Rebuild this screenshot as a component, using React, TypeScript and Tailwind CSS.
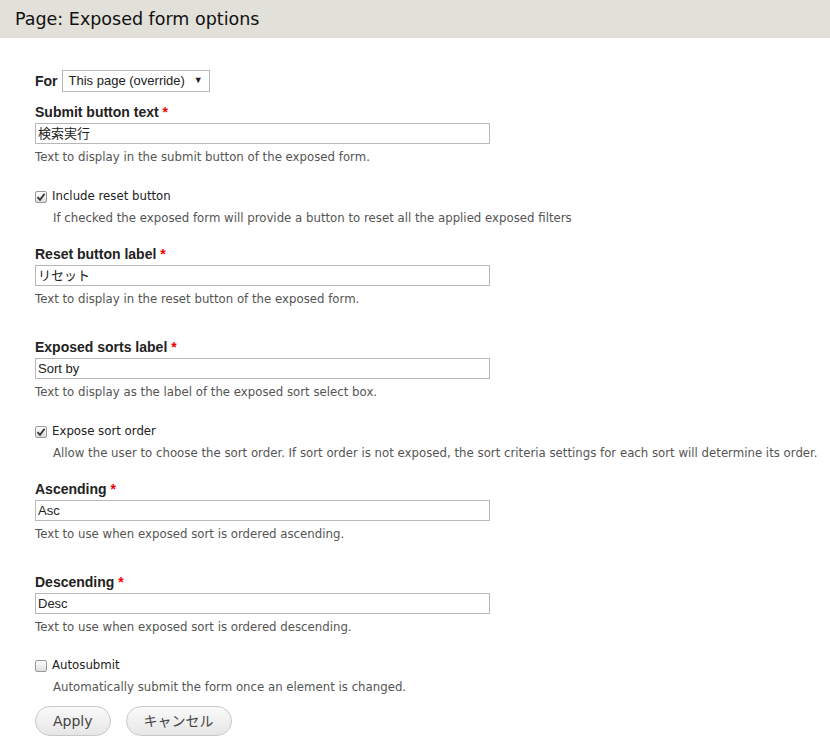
import React from "react";

const f = { fontFamily: '"DejaVu Sans", "Noto Sans CJK JP", sans-serif' };
const a = { fontFamily: '"Liberation Sans", "Noto Sans CJK JP", sans-serif' };

function Label({ t }: { t: string }) {
  return (
    <div className="text-[14px] font-bold text-[#222] leading-[16px] h-[16px]" style={a}>
      {t} <span className="text-[#e00]">*</span>
    </div>
  );
}
function Input({ v }: { v: string }) {
  return (
    <div className="mt-[3px] w-[455px] h-[21px] border border-[#b8b8b8] px-[2px] text-[13px] leading-[19px] text-[#222]" style={a}>
      {v}
    </div>
  );
}
function Desc({ t, ml = 0 }: { t: string; ml?: number }) {
  return (
    <div className="text-[11.75px] text-[#555] leading-[14px] mt-[6px]" style={{ ...f, marginLeft: ml }}>
      {t}
    </div>
  );
}
function Check({ t, checked }: { t: string; checked: boolean }) {
  return (
    <div className="flex items-center gap-[5px] h-[16px]">
      <div className="w-[12px] h-[12px] border border-[#999] rounded-[2px] bg-gradient-to-b from-[#fff] to-[#ddd] flex items-center justify-center">
        {checked && (
          <svg width="10" height="10" viewBox="0 0 10 10"><path d="M1.5 5.2 L4 7.8 L8.6 1.8" stroke="#333" strokeWidth="1.8" fill="none" /></svg>
        )}
      </div>
      <span className="text-[11.75px] text-[#222]" style={f}>{t}</span>
    </div>
  );
}

export default function App() {
  return (
    <div className="w-[830px] h-[744px] bg-white overflow-hidden">
      <div className="h-[38px] bg-[#e1e0d9] flex items-center pl-[15px] text-[17.5px] text-[#111]" style={f}>
        Page: Exposed form options
      </div>
      <div className="pl-[35px]">
        <div className="mt-[32px] flex items-center gap-[4px] h-[22px]">
          <span className="text-[14px] font-bold text-[#222]" style={a}>For</span>
          <div className="h-[22px] w-[148px] border border-[#b8b8b8] flex items-center justify-between px-[6px] text-[13px] text-[#222]" style={a}>
            <span>This page (override)</span><span className="text-[9px]">▼</span>
          </div>
        </div>
        <div className="mt-[12px]"><Label t="Submit button text" /><Input v="検索実行" /><Desc t="Text to display in the submit button of the exposed form." /></div>
        <div className="mt-[25px]"><Check t="Include reset button" checked /><Desc t="If checked the exposed form will provide a button to reset all the applied exposed filters" ml={18} /></div>
        <div className="mt-[21px]"><Label t="Reset button label" /><Input v="リセット" /><Desc t="Text to display in the reset button of the exposed form." /></div>
        <div className="mt-[33px]"><Label t="Exposed sorts label" /><Input v="Sort by" /><Desc t="Text to display as the label of the exposed sort select box." /></div>
        <div className="mt-[25px]"><Check t="Expose sort order" checked /><Desc t="Allow the user to choose the sort order. If sort order is not exposed, the sort criteria settings for each sort will determine its order." ml={18} /></div>
        <div className="mt-[21px]"><Label t="Ascending" /><Input v="Asc" /><Desc t="Text to use when exposed sort is ordered ascending." /></div>
        <div className="mt-[33px]"><Label t="Descending" /><Input v="Desc" /><Desc t="Text to use when exposed sort is ordered descending." /></div>
        <div className="mt-[24px]"><Check t="Autosubmit" checked={false} /><Desc t="Automatically submit the form once an element is changed." ml={18} /></div>
        <div className="mt-[12px] flex gap-[15px]">
          {["Apply", "キャンセル"].map((b) => (
            <div key={b} className="h-[30px] px-[17px] rounded-full border border-[#c8c8c8] bg-gradient-to-b from-[#fafafa] to-[#e6e6e6] flex items-center text-[14px] text-[#444]" style={f}>{b}</div>
          ))}
        </div>
      </div>
    </div>
  );
}
